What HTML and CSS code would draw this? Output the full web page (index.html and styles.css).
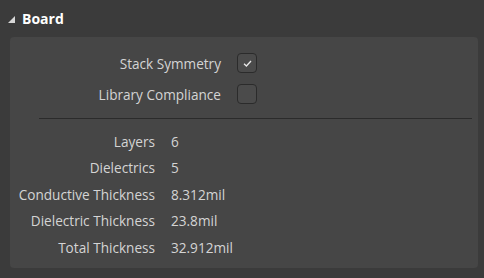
FILE: index.html
```html
<!DOCTYPE html>
<html>
<head>
    <title>Board</title>
    <link rel="stylesheet" href="styles.css">
</head>
<body>
    <div class="section-header">
        <svg class="expander" width="7" height="7" viewBox="0 0 7 7"><polygon points="7,0 7,7 0,7"/></svg>
        <span>Board</span>
    </div>

    <div class="panel">
        <div class="checks">
            <label class="check-label">Stack Symmetry</label>
            <span class="checkbox">
                <svg width="9" height="7" viewBox="0 0 9 7"><polyline points="1,3.8 3.4,6 8,1"/></svg>
            </span>
            <label class="check-label">Library Compliance</label>
            <span class="checkbox"></span>
        </div>

        <div class="separator"></div>

        <div class="props">
            <span class="prop-name">Layers</span><span class="prop-value">6</span>
            <span class="prop-name">Dielectrics</span><span class="prop-value">5</span>
            <span class="prop-name">Conductive Thickness</span><span class="prop-value">8.312mil</span>
            <span class="prop-name">Dielectric Thickness</span><span class="prop-value">23.8mil</span>
            <span class="prop-name">Total Thickness</span><span class="prop-value">32.912mil</span>
        </div>
    </div>
</body>
</html>
```

FILE: styles.css
```css
html, body {
    margin: 0;
    padding: 0;
}

body {
    background: #3b3b3b;
    font-family: 'Open Sans', sans-serif;
    font-size: 13.6px;
    color: #d4d4d4;
    width: 484px;
    height: 278px;
}

.section-header {
    height: 37px;
    display: flex;
    align-items: center;
    padding-left: 8px;
    gap: 7px;
    color: #ffffff;
    font-weight: bold;
    font-size: 14px;
}

.expander {
    fill: #d8d8d8;
    margin-top: 2px;
}

.panel {
    margin: 0 6px 0 10px;
    height: 231px;
    background: #464646;
    border-radius: 4px;
    box-sizing: border-box;
    padding-top: 16px;
}

.checks {
    display: grid;
    grid-template-columns: 211px 20px;
    column-gap: 16px;
    row-gap: 11px;
    align-items: center;
}

.check-label {
    text-align: right;
}

.checkbox {
    width: 20px;
    height: 20px;
    box-sizing: border-box;
    border: 1px solid #2b2b2b;
    border-radius: 4px;
    background: #4b4b4b;
    display: flex;
    align-items: center;
    justify-content: center;
}

.checkbox svg {
    fill: none;
    stroke: #e8e8e8;
    stroke-width: 1.3;
}

.separator {
    height: 1px;
    background: #2b2b2b;
    margin: 14px 6px 0 29px;
}

.props {
    display: grid;
    grid-template-columns: 145px auto;
    column-gap: 16px;
    grid-auto-rows: 26.5px;
    align-items: center;
    margin-top: 9px;
}

.prop-name {
    text-align: right;
}
```
